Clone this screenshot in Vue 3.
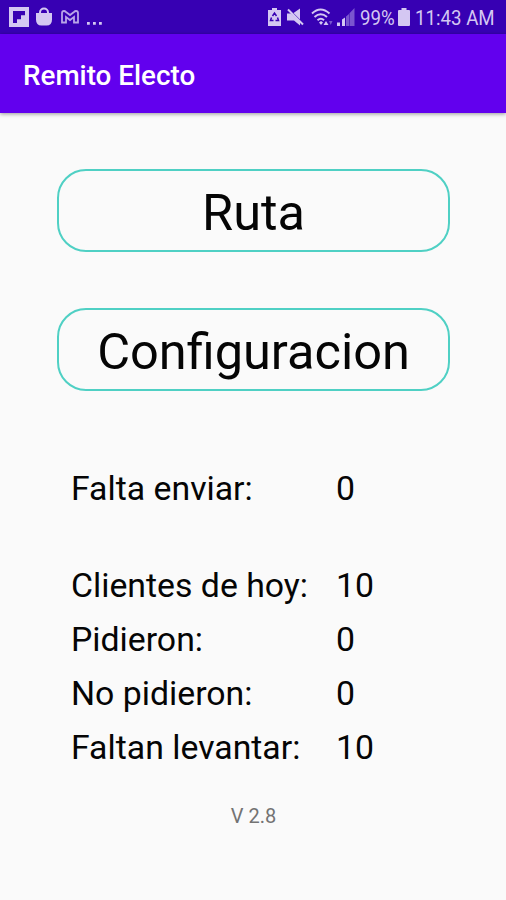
<template>
  <div class="screen">
    <div class="status-bar">
      <div class="status-left">
        <svg class="icon-flip" width="20" height="20" viewBox="0 0 20 20">
          <rect width="20" height="20" />
          <path class="cut" d="M4 4h12v4.2h-4v4H8V16H4z" />
        </svg>
        <svg class="icon-bag" width="18" height="20" viewBox="0 0 18 20">
          <path d="M1 6h16v6.5q0 6-5.500 6h-5q-5.500 0-5.500-6z" />
          <path class="line" d="M5 8V5.500a4 4 0 0 1 8 0V8" />
        </svg>
        <svg class="icon-mail" width="18" height="14" viewBox="0 0 18 14">
          <path
            class="thin"
            d="M1 12.500V3q0-2 2-2 1 0 2 1l4 3 4-3q1-1 2-1 2 0 2 2v9.500h-4V7L9 10 5 7v5.500z"
          />
        </svg>
        <svg class="icon-dots" width="16" height="20" viewBox="0 0 16 20">
          <path d="M0 15h2.800v2.800H0zM6 15h2.800v2.800H6zM12 15h2.800v2.800H12z" />
        </svg>
      </div>
      <div class="status-right">
        <svg class="icon-saver" width="13" height="18" viewBox="0 0 13 18">
          <path d="M4 0h5v2h4v16H0V2h4z" />
          <path class="recycle" d="M4.500 8l2-3 2 3M9.500 9.500l1 3H7.500M5.500 12.500h-3l1-3" />
        </svg>
        <svg class="icon-mute" width="17" height="18" viewBox="0 0 17 18">
          <path d="M0 5.500h4L13 14v3.500L7 12.500H0zM6.500 5L13 .5v11z" />
          <path class="line" d="M1 1.500l15 15" />
        </svg>
        <svg class="icon-wifi" width="22" height="18" viewBox="0 0 22 18">
          <path class="line" d="M1 5.500q8.500-8 17.500 0M3.500 9q6.200-5.500 12.500 0M6.500 12.300q3.500-3 6.500 0" />
          <path d="M8 14.500l2-1.500 2 1.500-2 2.500zM12.500 17l2.500-4 2.500 4z" />
          <path class="dim" d="M18 13h3.500L19.700 17z" />
        </svg>
        <svg class="icon-signal" width="18" height="18" viewBox="0 0 18 18">
          <path d="M0 14.500h3V18H0zM5 11.500l3-2V18H5z" />
          <path class="dim" d="M9 8.500l3-2.500v12H9zM12.500 5.200L17.500 0v18h-5z" />
        </svg>
        <span class="percent"><span>99%</span></span>
        <svg class="icon-battery" width="12" height="18" viewBox="0 0 12 18">
          <path d="M3.500 0h5v2H11q1 0 1 1v14q0 1-1 1H1q-1 0-1-1V3q0-1 1-1h2.500z" />
        </svg>
        <span class="clock"><span>11:43 AM</span></span>
      </div>
    </div>

    <header class="app-bar">
      <h1>Remito Electo</h1>
    </header>

    <main class="content">
      <button v-for="action in actions" :key="action" class="action">{{ action }}</button>

      <dl class="stats">
        <div v-for="item in stats" :key="item.label" class="stat">
          <dt>{{ item.label }}</dt>
          <dd>{{ item.value }}</dd>
        </div>
      </dl>

      <p class="version">V 2.8</p>
    </main>
  </div>
</template>

<script setup>
const actions = ['Ruta', 'Configuracion']

const stats = [
  { label: 'Falta enviar:', value: 0 },
  { label: 'Clientes de hoy:', value: 10 },
  { label: 'Pidieron:', value: 0 },
  { label: 'No pidieron:', value: 0 },
  { label: 'Faltan levantar:', value: 10 }
]
</script>

<style>
body {
  background: #fafafa;
}
</style>

<style scoped>
.screen {
  height: 900px;
  overflow: hidden;
  background: #fafafa;
  color: #050505;
  font-family: Roboto, "Liberation Sans", sans-serif;
}

.status-bar {
  display: flex;
  justify-content: space-between;
  box-sizing: border-box;
  height: 34px;
  padding: 0 11px 0 9px;
  background: #3700b3;
  color: #d4c7f2;
}

.status-left,
.status-right {
  display: flex;
  align-items: center;
}

.status-bar svg {
  flex: none;
  fill: #d4c7f2;
}

.status-bar .cut {
  fill: #3700b3;
}

.status-bar .line {
  fill: none;
  stroke: #d4c7f2;
  stroke-width: 2;
}

.status-bar .thin {
  fill: none;
  stroke: #b9a5e8;
  stroke-width: 1.8;
}

.status-bar .recycle {
  fill: none;
  stroke: #3700b3;
  stroke-width: 1.5;
}

.status-bar .dim {
  fill: #7a55cf;
}

.icon-bag {
  margin-left: 6px;
}

.icon-mail {
  margin-left: 8px;
}

.icon-dots {
  margin-left: 8px;
}

.icon-mute {
  margin-left: 6px;
}

.icon-wifi {
  margin-left: 7px;
}

.icon-signal {
  margin-left: 4px;
}

.icon-battery {
  margin-left: 3px;
}

.percent,
.clock {
  display: flex;
  padding-top: 2px;
  font-size: 21px;
  line-height: 32px;
  white-space: nowrap;
}

.percent {
  width: 35px;
  margin-left: 5px;
}

.clock {
  width: 80px;
  margin-left: 5px;
}

.percent span,
.clock span {
  transform: scaleX(0.89);
  transform-origin: left;
}

.app-bar {
  display: flex;
  align-items: center;
  height: 79px;
  padding-left: 23px;
  background: #6200ee;
  box-shadow: 0 1px 4px rgba(0, 0, 0, 0.4);
}

.app-bar h1 {
  margin: 5px 0 0;
  color: #fff;
  font-size: 27.8px;
  font-weight: 500;
  line-height: 32px;
}

.content {
  display: flex;
  flex-direction: column;
  padding: 56px 56px 0 57px;
}

.action {
  height: 83px;
  margin: 0 0 56px;
  padding: 5px 0 0;
  border: 2px solid #4fd0c4;
  border-radius: 29px;
  background: transparent;
  color: #050505;
  font-family: inherit;
  font-size: 50.5px;
  line-height: 60px;
}

.stats {
  margin: 15px 0 0 14px;
  font-size: 33.8px;
  line-height: 54px;
}

.stat {
  display: grid;
  grid-template-columns: 265px 1fr;
}

.stat:first-child {
  margin-bottom: 43px;
}

.stat dd {
  margin: 0;
}

.version {
  margin: 29px 0 0;
  color: #737373;
  font-size: 20px;
  line-height: 24px;
  text-align: center;
}
</style>
